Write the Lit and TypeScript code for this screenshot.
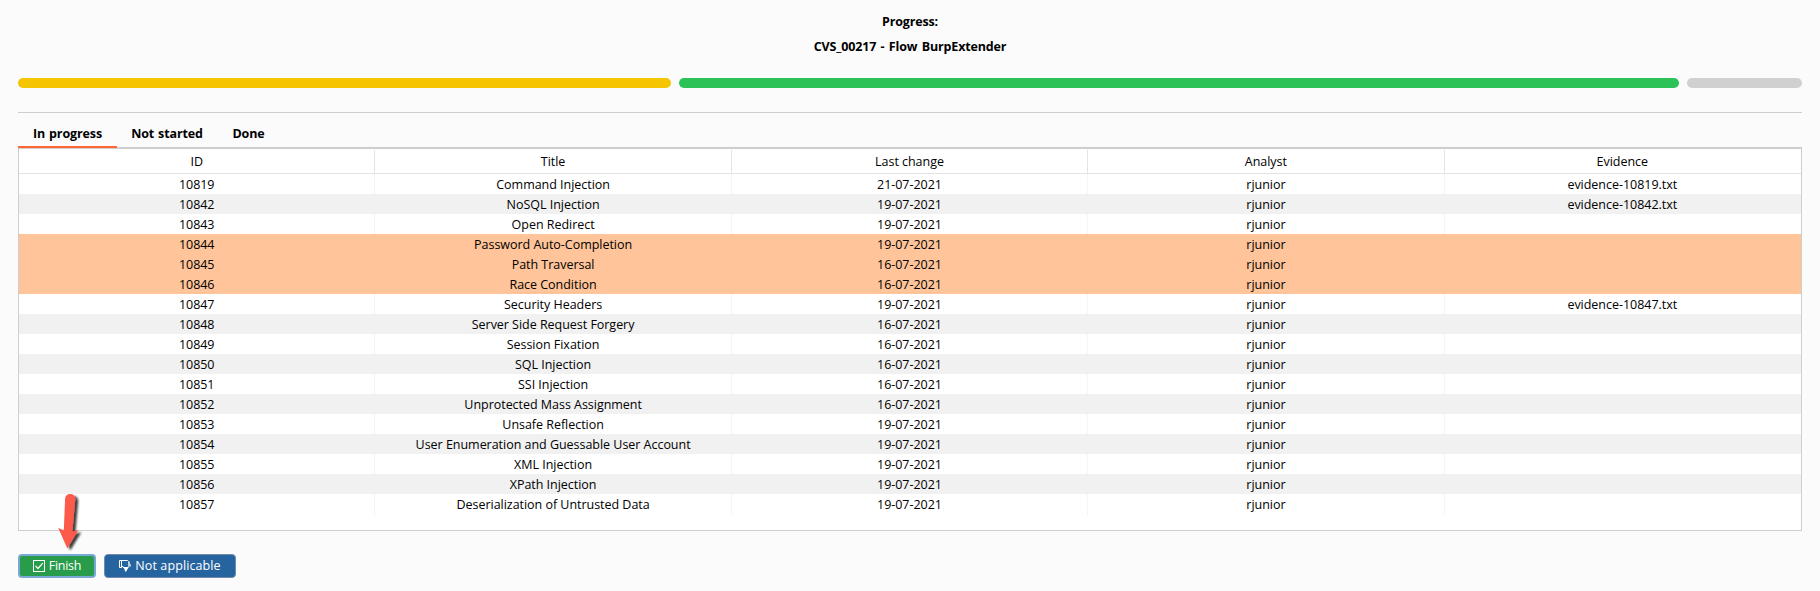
import { LitElement, html, css, svg } from "lit";
import { customElement, state } from "lit/decorators.js";
import { classMap } from "lit/directives/class-map.js";

interface Finding {
  id: string;
  title: string;
  changed: string;
  evidence?: string;
  selected?: boolean;
}

const FINDINGS: Finding[] = [
  { id: "10819", title: "Command Injection", changed: "21-07-2021", evidence: "evidence-10819.txt" },
  { id: "10842", title: "NoSQL Injection", changed: "19-07-2021", evidence: "evidence-10842.txt" },
  { id: "10843", title: "Open Redirect", changed: "19-07-2021" },
  { id: "10844", title: "Password Auto-Completion", changed: "19-07-2021", selected: true },
  { id: "10845", title: "Path Traversal", changed: "16-07-2021", selected: true },
  { id: "10846", title: "Race Condition", changed: "16-07-2021", selected: true },
  { id: "10847", title: "Security Headers", changed: "19-07-2021", evidence: "evidence-10847.txt" },
  { id: "10848", title: "Server Side Request Forgery", changed: "16-07-2021" },
  { id: "10849", title: "Session Fixation", changed: "16-07-2021" },
  { id: "10850", title: "SQL Injection", changed: "16-07-2021" },
  { id: "10851", title: "SSI Injection", changed: "16-07-2021" },
  { id: "10852", title: "Unprotected Mass Assignment", changed: "16-07-2021" },
  { id: "10853", title: "Unsafe Reflection", changed: "19-07-2021" },
  { id: "10854", title: "User Enumeration and Guessable User Account", changed: "19-07-2021" },
  { id: "10855", title: "XML Injection", changed: "19-07-2021" },
  { id: "10856", title: "XPath Injection", changed: "19-07-2021" },
  { id: "10857", title: "Deserialization of Untrusted Data", changed: "19-07-2021" },
];

const COLUMNS = ["ID", "Title", "Last change", "Analyst", "Evidence"];
const TABS = ["In progress", "Not started", "Done"];

@customElement("app-root")
export class AppRoot extends LitElement {
  @state() private tab = 0;

  static styles = css`
    :host {
      display: flex;
      flex-direction: column;
      position: relative;
      box-sizing: border-box;
      height: 591px;
      padding: 9px 18px 13px;
      background: #fbfbfb;
      color: #000;
      font: 12.5px/25px "Open Sans", sans-serif;
      overflow: hidden;
    }
    .heading {
      text-align: center;
      font-weight: 700;
      letter-spacing: -0.15px;
      word-spacing: 1.3px;
      height: 69px;
    }
    .heading div { height: 25px; }
    .bars {
      display: grid;
      grid-template-columns: 653px 1000px 1fr;
      gap: 8px;
      height: 10px;
    }
    .bar { border-radius: 5px; }
    .yellow { background: #f4c500; }
    .green { background: #2dc258; }
    .gray { background: #d0d0d0; }
    .rule { height: 1px; margin-top: 24px; background: #cecece; }
    .tabs {
      display: flex;
      height: 35px;
      font-weight: 700;
      letter-spacing: -0.12px;
      word-spacing: 0.8px;
      z-index: 1;
    }
    .tab {
      box-sizing: border-box;
      padding-top: 8px;
      height: 35px;
      white-space: nowrap;
      cursor: pointer;
      border-bottom: 2px solid transparent;
      text-align: center;
    }
    .t0 { width: 99px; }
    .t1 { width: 100px; }
    .t2 { width: 63px; }
    .active { border-bottom-color: #ff6633; }
    .table {
      box-sizing: border-box;
      height: 384px;
      margin-top: -1px;
      border: 1px solid #cecece;
      border-top-width: 2px;
      background: #fff;
    }
    .row {
      display: grid;
      grid-template-columns: repeat(5, 1fr);
      height: 20px;
      line-height: 22px;
      text-align: center;
      letter-spacing: -0.03px;
    }
    .row:nth-child(odd) { background: #f1f1f1; }
    .row.head {
      height: 25px;
      box-sizing: border-box;
      padding: 1px 0;
      line-height: 23px;
      background: #fff;
      border-bottom: 1px solid #e3e3e3;
    }
    .cell { height: 100%; box-sizing: border-box; border-right: 1px solid #f5f5f5; white-space: nowrap; }
    .row:nth-child(odd) .cell { border-color: #f1f1f1; }
    .row.head .cell { border-color: #e3e3e3; }
    .row.selected { background: #ffc499; }
    .row.selected .cell { border-color: #ffc499; }
    .row .cell:last-child { border-color: transparent; }
    .actions { display: flex; gap: 8px; margin-top: 23px; }
    .btn {
      display: flex;
      align-items: center;
      justify-content: center;
      gap: 4px;
      box-sizing: border-box;
      height: 24px;
      padding: 0;
      border-radius: 4px;
      color: #fff;
      font: inherit;
      line-height: 20px;
    }
    .finish { width: 78px; background: #289c4b; border: 2px solid #78a9d6; letter-spacing: -0.3px; }
    .na { width: 132px; background: #2664a0; border: 1px solid #7488a8; letter-spacing: 0.1px; }
    .arrow { position: absolute; left: 50px; top: 488px; }
  `;

  private row(f: Finding) {
    return html`<div class=${classMap({ row: true, selected: !!f.selected })}>
      <div class="cell">${f.id}</div>
      <div class="cell">${f.title}</div>
      <div class="cell">${f.changed}</div>
      <div class="cell">rjunior</div>
      <div class="cell">${f.evidence ?? ""}</div>
    </div>`;
  }

  private arrow() {
    return html`<svg class="arrow" width="40" height="68" viewBox="0 0 40 68">
      <defs>
        <filter id="shade" x="-30%" y="-20%" width="170%" height="150%">
          <feDropShadow dx="3" dy="2" stdDeviation="1.3" flood-color="#000" flood-opacity="0.75" />
        </filter>
      </defs>
      ${svg`<path filter="url(#shade)" fill="#fc5a4c" d="M15.1 10.5Q15.7 6 20.2 6T25.3 11L22.4 43.5 28.3 42.2 17.3 60.6 8.2 39.7 13.8 42.5Z"/>`}
    </svg>`;
  }

  render() {
    return html`
      <div class="heading">
        <div>Progress:</div>
        <div>CVS_00217 - Flow BurpExtender</div>
      </div>
      <div class="bars">
        <div class="bar yellow"></div>
        <div class="bar green"></div>
        <div class="bar gray"></div>
      </div>
      <div class="rule"></div>
      <div class="tabs">
        ${TABS.map(
          (t, i) => html`<div
            class=${classMap({ tab: true, [`t${i}`]: true, active: i === this.tab })}
            @click=${() => (this.tab = i)}
          >${t}</div>`
        )}
      </div>
      <div class="table">
        <div class="row head">${COLUMNS.map((c) => html`<div class="cell">${c}</div>`)}</div>
        ${FINDINGS.map((f) => this.row(f))}
      </div>
      <div class="actions">
        <button class="btn finish">
          <svg width="12" height="12" viewBox="0 0 12 12" fill="none" stroke="#fff">
            <rect x=".5" y=".5" width="11" height="11" />
            <path d="M2.5 5.8 5 8.5 9.8 3.2" stroke-width="1.2" />
          </svg>
          <span>Finish</span>
        </button>
        <button class="btn na">
          <svg width="12" height="12" viewBox="0 0 12 12" fill="none" stroke="#fff">
            <path d="M.5 .5H2.5V7.5H.5Z" />
            <path d="M2.5 .5H8.5L9.5 1.5M2.5 6.5H4L5 8" />
            <path d="M9 1.5H11V4H11.8V6.8H9Z" fill="#fff" fill-opacity=".7" stroke="none" />
            <path d="M4 7H10L8.8 8.5 7.2 11.6H6L5.6 9.3Z" fill="#fff" stroke="none" />
          </svg>
          <span>Not applicable</span>
        </button>
      </div>
      ${this.arrow()}
    `;
  }
}
